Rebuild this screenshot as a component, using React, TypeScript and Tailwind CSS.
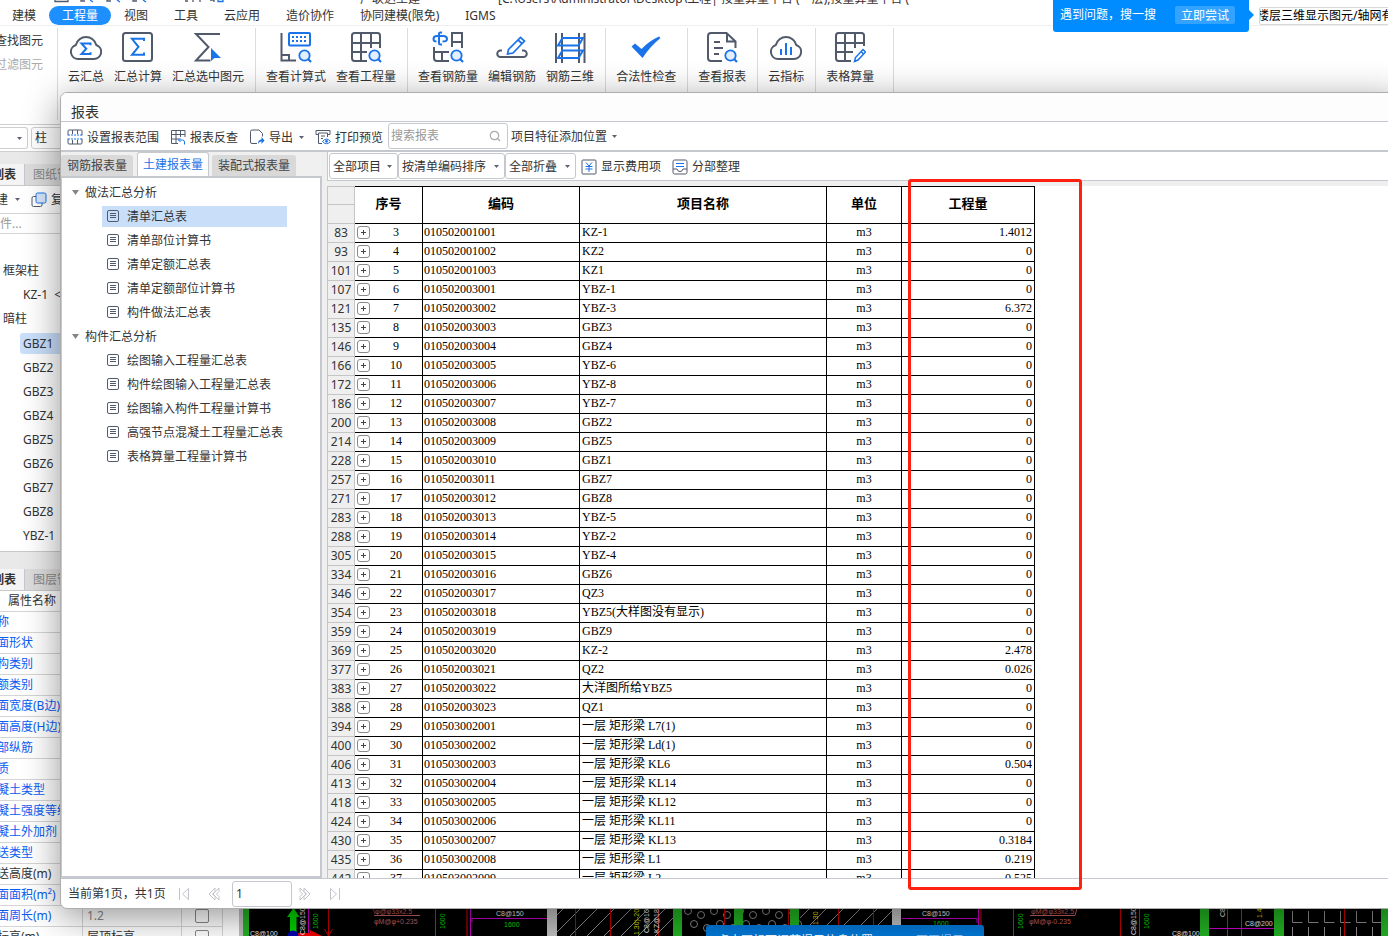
import React from "react";

const DARK = "#505a6b";
const BLUE = "#1a73e8";

type IconProps = { children: React.ReactNode; size?: string; box?: string };

function Svg({ children, size = "size-4", box = "0 0 16 16" }: IconProps) {
  return (
    <svg viewBox={box} className={`${size} shrink-0`} fill="none" stroke={DARK} aria-hidden="true">
      {children}
    </svg>
  );
}

function BigIcon({ children }: { children: React.ReactNode }) {
  return (
    <svg viewBox="0 0 32 32" className="size-8" fill="none" stroke={DARK} strokeWidth="2" aria-hidden="true">
      {children}
    </svg>
  );
}

const CLOUD = "M8.5 28h15.5a7.2 7.2 0 0 0 2.3-14A10.6 10.6 0 0 0 5.8 14 7.2 7.2 0 0 0 8.5 28z";

const lens = (
  <g stroke={BLUE} strokeWidth="1.8">
    <circle cx="24.5" cy="24.5" r="5.2" fill="#e3efff" />
    <path d="M28.3 28.3 31 31" strokeWidth="2.2" />
  </g>
);

const pencil = "M20.500 30.500 21.500 26.500 29 18.500l2.500 2.500-7.500 8zM27 20.500l2.500 2.500";

const ribbon: { label: string; icon: React.ReactNode }[][] = [
  [
    {
      label: "云汇总",
      icon: (
        <BigIcon>
          <path d={CLOUD} />
          <path d="M20.5 14.2v-1.7h-9l4.8 5.2-4.8 5.3h9v-1.7" stroke={BLUE} />
        </BigIcon>
      ),
    },
    {
      label: "汇总计算",
      icon: (
        <BigIcon>
          <rect x="1" y="2" width="29" height="28" rx="2.5" />
          <path d="M22 10V7.8H10l6.5 8-6.5 8h12v-2.2" stroke={BLUE} />
        </BigIcon>
      ),
    },
    {
      label: "汇总选中图元",
      icon: (
        <BigIcon>
          <path d="M28 3H4l12.5 13L4 29.5h14.5" />
          <path d="M19 17v13l3.5-3H29z" fill={BLUE} stroke="none" />
        </BigIcon>
      ),
    },
  ],
  [
    {
      label: "查看计算式",
      icon: (
        <BigIcon>
          <path d="M1.5 2v27.5H16M1.5 24H9v5" />
          <rect x="9" y="2" width="21" height="12.5" rx="1" stroke={BLUE} />
          <path d="M12 6h16M12 10h16" stroke={BLUE} strokeDasharray="2 2" />
          {lens}
        </BigIcon>
      ),
    },
    {
      label: "查看工程量",
      icon: (
        <BigIcon>
          <path d="M30 17V4.5Q30 2 27.5 2h-23Q2 2 2 4.5v22.500Q2 30 4.5 30H17M2 12h28M2 21h15M11 2v28M21 2v15" />
          {lens}
        </BigIcon>
      ),
    },
  ],
  [
    {
      label: "查看钢筋量",
      icon: (
        <BigIcon>
          <path d="M20 16V2h10v15M20 11h10M2 16v11q0 3 3 3h12M2 21h15M10 21v9" />
          <path d="M10 1.500H8.500Q7 1.500 7 3v9q0 1.500 1.500 1.500H10M12 5H5Q1.500 5 1.500 8q0 2.500 3 2.500M10.500 10.500Q15 10.500 15 8t-3-3" stroke={BLUE} />
          {lens}
        </BigIcon>
      ),
    },
    {
      label: "编辑钢筋",
      icon: (
        <BigIcon>
          <path d="M6 19.500H4.500a3.200 3.200 0 0 0 0 6.500h23a3.200 3.200 0 0 0 0-6.500H26" />
          <path d="m12.500 18.500 12-12 4 3.500-11.500 12-5.500 1zM22 9l4 3.500" stroke={BLUE} strokeWidth="1.7" />
        </BigIcon>
      ),
    },
    {
      label: "钢筋三维",
      icon: (
        <BigIcon>
          <path d="M2 2v30M8 2v30M25 2v30M30.500 2v30" />
          <path d="M8.500 7H29l-4.500 7.500H4zM8.500 19.500H29L24.500 27H4z" stroke={BLUE} />
        </BigIcon>
      ),
    },
  ],
  [
    {
      label: "合法性检查",
      icon: (
        <BigIcon>
          <path d="M1.500 15.500 5 12.500l6.500 5.500Q19 10 29 5.500l1.500 1.500Q20 15.500 12.500 27z" fill={BLUE} stroke="none" />
        </BigIcon>
      ),
    },
  ],
  [
    {
      label: "查看报表",
      icon: (
        <BigIcon>
          <path d="M16 30H5q-3 0-3-3V5q0-3 3-3h15.500l9 8.500V17M21 2v8.500h9M8 11h6M8 17h9M8 23h5" />
          {lens}
        </BigIcon>
      ),
    },
  ],
  [
    {
      label: "云指标",
      icon: (
        <BigIcon>
          <path d={CLOUD} />
          <path d="M11 18v6M16 12v12M21 16v8" stroke={BLUE} />
        </BigIcon>
      ),
    },
  ],
  [
    {
      label: "表格算量",
      icon: (
        <BigIcon>
          <path d="M30 15V4.500Q30 2 27.500 2h-23Q2 2 2 4.500v22.500Q2 30 4.500 30H17M2 12h28M2 21h17M11 2v28M21 2v15" />
          <path d={pencil} stroke={BLUE} strokeWidth="1.5" />
        </BigIcon>
      ),
    },
  ],
];

const menu = ["建模", "工程量", "视图", "工具", "云应用", "造价协作", "协同建模(限免)", "IGMS"];

const reportGroups = [
  { title: "做法汇总分析", items: ["清单汇总表", "清单部位计算书", "清单定额汇总表", "清单定额部位计算书", "构件做法汇总表"] },
  {
    title: "构件汇总分析",
    items: ["绘图输入工程量汇总表", "构件绘图输入工程量汇总表", "绘图输入构件工程量计算书", "高强节点混凝土工程量汇总表", "表格算量工程量计算书"],
  },
];

const rows: [number, number, string, string, string][] = [
  [83, 3, "010502001001", "KZ-1", "1.4012"],
  [93, 4, "010502001002", "KZ2", "0"],
  [101, 5, "010502001003", "KZ1", "0"],
  [107, 6, "010502003001", "YBZ-1", "0"],
  [121, 7, "010502003002", "YBZ-3", "6.372"],
  [135, 8, "010502003003", "GBZ3", "0"],
  [146, 9, "010502003004", "GBZ4", "0"],
  [166, 10, "010502003005", "YBZ-6", "0"],
  [172, 11, "010502003006", "YBZ-8", "0"],
  [186, 12, "010502003007", "YBZ-7", "0"],
  [200, 13, "010502003008", "GBZ2", "0"],
  [214, 14, "010502003009", "GBZ5", "0"],
  [228, 15, "010502003010", "GBZ1", "0"],
  [257, 16, "010502003011", "GBZ7", "0"],
  [271, 17, "010502003012", "GBZ8", "0"],
  [283, 18, "010502003013", "YBZ-5", "0"],
  [288, 19, "010502003014", "YBZ-2", "0"],
  [305, 20, "010502003015", "YBZ-4", "0"],
  [334, 21, "010502003016", "GBZ6", "0"],
  [346, 22, "010502003017", "QZ3", "0"],
  [354, 23, "010502003018", "YBZ5(大样图没有显示)", "0"],
  [359, 24, "010502003019", "GBZ9", "0"],
  [369, 25, "010502003020", "KZ-2", "2.478"],
  [377, 26, "010502003021", "QZ2", "0.026"],
  [383, 27, "010502003022", "大洋图所给YBZ5", "0"],
  [388, 28, "010502003023", "QZ1", "0"],
  [394, 29, "010503002001", "一层 矩形梁 L7(1)", "0"],
  [400, 30, "010503002002", "一层 矩形梁 Ld(1)", "0"],
  [406, 31, "010503002003", "一层 矩形梁 KL6", "0.504"],
  [413, 32, "010503002004", "一层 矩形梁 KL14", "0"],
  [418, 33, "010503002005", "一层 矩形梁 KL12", "0"],
  [424, 34, "010503002006", "一层 矩形梁 KL11", "0"],
  [430, 35, "010503002007", "一层 矩形梁 KL13", "0.3184"],
  [435, 36, "010503002008", "一层 矩形梁 L1", "0.219"],
  [442, 37, "010503002009", "一层 矩形梁 L2", "0.525"],
];

const properties: { name: string; plain?: boolean; value?: string }[] = [
  { name: "称" },
  { name: "面形状" },
  { name: "构类别" },
  { name: "额类别" },
  { name: "面宽度(B边)" },
  { name: "面高度(H边)" },
  { name: "部纵筋" },
  { name: "质" },
  { name: "凝土类型" },
  { name: "凝土强度等级" },
  { name: "凝土外加剂" },
  { name: "送类型" },
  { name: "送高度(m)", plain: true },
  { name: "面面积(m²)" },
  { name: "面周长(m)", value: "1.2" },
  { name: "标高(m)", plain: true, value: "层顶标高" },
];

function Caret({ className = "" }: { className?: string }) {
  return (
    <svg viewBox="0 0 5 3" className={`h-[3px] w-[5px] shrink-0 ${className}`} aria-hidden="true">
      <path d="M0 0h5L2.500 3z" fill="#5b6270" />
    </svg>
  );
}

function TopArea() {
  return (
    <header className="shrink-0 bg-white">
      <div className="flex h-[6px] items-end overflow-hidden pl-[54px] text-[#3a3030]" aria-hidden="true">
        <svg viewBox="54 0 170 6" className="h-[6px] w-[170px] shrink-0" fill="none" stroke={DARK} strokeWidth="1.3">
          <path d="M55 0v1.500h13V0M81 0v1h4M107 0v1h4M133 0v1h4M185 1h3M193 0v2M200 0v2M210 0h4v2" />
          <path d="M90 0l3 2M117 0l3 2M143 0l3 2M218 0v1.500h5V0" stroke={BLUE} />
        </svg>
        <div className="flex items-end leading-[14px] whitespace-nowrap">
          <span className="w-[76px]" />
          <span className="w-[198px] pl-[60px]">广联达土建</span>
          <span>[C:\Users\Administrator\Desktop\工程| 按量算量平台 (一层),按量算量平台 (</span>
        </div>
      </div>
      <nav className="-ml-px flex h-5 items-center border-b border-[#efefef]">
        {menu.map((m, i) => (
          <button
            key={m}
            className={`h-[19px] rounded-full px-[13px] leading-[19px] whitespace-nowrap ${i === 1 ? "bg-[#1e8fff] text-white" : ""}`}
          >
            {m}
          </button>
        ))}
      </nav>
      <div className="flex h-[98px] overflow-hidden pt-[2px]">
        <div className="flex w-[57px] shrink-0 flex-col items-end pt-px pr-[14px] leading-6 whitespace-nowrap">
          <button>查找图元</button>
          <button className="text-[#aaa]">过滤图元</button>
        </div>
        {ribbon.map((group, i) => (
          <div key={i} className="flex h-[92px] shrink-0 items-start gap-[10px] border-l border-[#dcdcdc] pt-[3px] pr-[11px] pl-[10px]">
            {group.map((b) => (
              <button key={b.label} className="flex flex-col items-center gap-[5px] leading-[18px] whitespace-nowrap">
                {b.icon}
                {b.label}
              </button>
            ))}
          </div>
        ))}
        <div className="ml-2 h-[92px] border-l border-[#dcdcdc]" />
      </div>
    </header>
  );
}

function PanelTabs({ active, other }: { active: string; other: string }) {
  return (
    <div className="flex h-[22px] shrink-0 border-b border-[#c9c9c9] bg-[#dcdcdc] leading-[22px] whitespace-nowrap">
      <button className="flex w-[25px] shrink-0 justify-end border-r border-[#c5c8cf] bg-[#f4f4f4] pr-2 font-bold">{active}</button>
      <button className="w-[35px] overflow-hidden pl-2 text-left text-[#888]">{other}</button>
    </div>
  );
}

function SidePanel() {
  const cell = "border-r border-b border-[#d5d5d5] p-0";
  return (
    <aside className="flex w-[239px] shrink-0 flex-col overflow-hidden bg-white whitespace-nowrap">
      <div className="flex h-7 shrink-0 items-center gap-[3px] border-y border-[#cfcfcf]">
        <button aria-label="楼层" className="flex h-[22px] w-7 items-center justify-end rounded-r-[3px] border border-l-0 border-[#cfcfcf] pr-[5px]">
          <Caret />
        </button>
        <button className="h-[22px] w-[120px] rounded-[3px] border border-[#cfcfcf] pl-[3px] text-left">柱</button>
      </div>
      <div className="h-3 shrink-0 bg-[#e9e9e9]" />
      <PanelTabs active="列表" other="图纸管理" />
      <div className="flex h-7 shrink-0 items-center border-b border-[#d5d5d5]">
        <button className="-ml-1 flex items-center gap-[7px]">
          建
          <Caret />
        </button>
        <button className="ml-[11px] flex items-center gap-1">
          <Svg>
            <rect x="1" y="4.500" width="10" height="10" rx="1.500" />
            <rect x="5" y="1" width="10" height="10" rx="1.500" fill="#d6e6fb" stroke={BLUE} />
          </Svg>
          复制
        </button>
      </div>
      <input aria-label="搜索构件" placeholder="件..." className="h-5 shrink-0 border-b border-[#d5d5d5] placeholder:text-[#999]" />
      <ul className="shrink-0 pt-[25px] pb-1 leading-6">
        <li className="pl-[3px]">框架柱</li>
        <li className="pl-[23px]">KZ-1&nbsp; &lt;</li>
        <li className="pl-[3px]">暗柱</li>
        {["GBZ1", "GBZ2", "GBZ3", "GBZ4", "GBZ5", "GBZ6", "GBZ7", "GBZ8", "YBZ-1"].map((n, i) => (
          <li key={n} className="flex h-6 items-center pl-5">
            <span className={`h-[21px] w-[120px] rounded-[3px] pl-[3px] leading-[21px] ${i === 0 ? "bg-[#c9dffa]" : ""}`}>{n}</span>
          </li>
        ))}
      </ul>
      <div className="h-[18px] shrink-0 border-t border-[#c9c9c9] bg-[#e9e9e9]" />
      <PanelTabs active="列表" other="图层管理" />
      <table className="w-[223px] shrink-0 table-fixed border-separate border-spacing-0 leading-5">
        <colgroup>
          <col className="w-[83px]" />
          <col className="w-[99px]" />
          <col className="w-[41px]" />
        </colgroup>
        <thead>
          <tr className="h-[21px]">
            <th className={`${cell} pl-2 text-left font-normal`}>属性名称</th>
            <th className={`${cell} font-normal`}>属性值</th>
            <th className={`${cell} font-normal`}>附加</th>
          </tr>
        </thead>
        <tbody>
          {properties.map((p) => (
            <tr key={p.name} className="h-[21px]">
              <td className={`${cell} overflow-hidden`}>
                <span className={`-ml-[3px] ${p.plain ? "" : "text-[#0b5cf0]"}`}>{p.name}</span>
              </td>
              <td className={`${cell} pl-1 ${p.plain ? "" : "text-[#888]"}`}>{p.value}</td>
              <td className={cell}>
                {p.value && (
                  <input
                    type="checkbox"
                    aria-label={p.name}
                    className="mx-auto block size-[14px] appearance-none rounded-[2px] border border-[#888]"
                  />
                )}
              </td>
            </tr>
          ))}
        </tbody>
      </table>
    </aside>
  );
}

function VText({ x, y, fill, children }: { x: number; y: number; fill: string; children: string }) {
  return (
    <text transform={`translate(${x} ${y}) rotate(-90)`} fill={fill} stroke="none">
      {children}
    </text>
  );
}

function Drawing() {
  const range = (n: number) => Array.from({ length: n }, (_, i) => i);
  return (
    <svg
      viewBox="239 908 1149 28"
      className="h-7 w-[1149px] shrink-0"
      fill="none"
      fontSize="7"
      fontFamily="Liberation Sans, sans-serif"
      aria-hidden="true"
    >
      <defs>
        <clipPath id="hatchA">
          <path d="M557 908h116v28H557z" />
        </clipPath>
        <clipPath id="hatchB">
          <path d="M800 908h92v28h-92z" />
        </clipPath>
      </defs>
      <path d="M239 908h4v28h-4zM547 908h10v28h-10zM892 908h9v28h-9z" fill="#bdbdbd" />
      <g stroke="#8a8a8a">
        <g clipPath="url(#hatchA)">
          {range(8).map((i) => (
            <path key={i} d={`M${534 + i * 17} 938l31-31`} />
          ))}
        </g>
        <g clipPath="url(#hatchB)">
          {range(8).map((i) => (
            <path key={i} d={`M${780 + i * 17} 938l31-31`} />
          ))}
        </g>
        {range(9).map((i) => (
          <g key={i}>
            <circle cx={688 + i * 13} cy={i % 2 ? 915 : 911} r="3.500" />
            <circle cx={694 + i * 13} cy={i % 2 ? 928 : 924} r="3.500" />
          </g>
        ))}
        {range(6).map((i) => (
          <path key={i} d={`M${1292.5 + i * 16} 911v11.500h10M${1292.5 + i * 16} 927v9`} />
        ))}
      </g>
      <path
        d="M243 908h6v28h-6zM673 908h9v28h-9zM734 908h9v28h-9zM790 908h9v28h-9zM1200 908h9v28h-9zM1274 908h10v28h-10zM1381 908h7v28h-7z"
        fill="#22b022"
      />
      <g stroke="#c00000">
        <path d="M328.500 908v28m-4-7 4 7 4-7M575.500 908v28M610.500 908v28M658.500 908v28M724.500 908v28M788.500 908v28M838.500 908v28M873.500 908v28M1120.500 908v28M1344.500 908v28" />
        <path d="M467 908v28M981 908v28" stroke="#700000" strokeWidth="2" />
      </g>
      <path
        d="M308.500 908v28M435.500 908v28M470.500 908v28M472 922v-3.500h75M902 918.500h75v4M978.500 908v28M1013.500 908v28M1139.500 908v28M1227.500 908v28M1241.500 908v28M1209 928.500h65"
        stroke="#c400c4"
      />
      <path d="M374 915.500h46M1030 915.500h45l2-7" stroke="#c46060" />
      <path d="M290 936v-19h-3l6.500-9 6 9h-3v19z" fill="#00d000" />
      <path d="M298 933h12v-3l12 6v1h-24z" fill="#f00000" />
      <circle cx="293" cy="936" r="5.500" fill="#0000b0" />
      <g fill="#c46060">
        <text x="373" y="914">\φ@φ33x2.5</text>
        <text x="374" y="924">φM@φ+0.235</text>
        <text x="1031" y="914">φM@φ33x2.5</text>
        <text x="1029" y="924">φM@φ-0.235</text>
      </g>
      <g fill="#e6e6e6">
        <text x="250" y="936">C8@100</text>
        <text x="496" y="916">C8@150</text>
        <text x="922" y="916">C8@150</text>
        <text x="1172" y="936">C8@100</text>
        <text x="1245" y="926">C8@200</text>
      </g>
      <g fill="#00d800">
        <text x="504" y="927">1600</text>
        <text x="933" y="926">1600</text>
      </g>
      <VText x={305} y={935} fill="#e6e6e6">C8@150</VText>
      <VText x={318} y={929} fill="#00d800">1600</VText>
      <VText x={445} y={929} fill="#00d800">1600</VText>
      <VText x={639} y={935} fill="#d8d800">1.30)-200</VText>
      <VText x={649} y={933} fill="#e6e6e6">C8@100/200</VText>
      <VText x={659} y={933} fill="#e6e6e6">KZ@180</VText>
      <VText x={818} y={925} fill="#d8d800">1.30</VText>
      <VText x={1023} y={929} fill="#00d800">1600</VText>
      <VText x={1136} y={935} fill="#e6e6e6">C8@150</VText>
      <VText x={1149} y={929} fill="#00d800">1600</VText>
      <VText x={1225} y={917} fill="#e6e6e6">C8</VText>
      <VText x={1262} y={918} fill="#d8d800">1.40</VText>
    </svg>
  );
}

function ToolButton({ icon, children }: { icon: React.ReactNode; children: React.ReactNode }) {
  return (
    <button className="flex items-center gap-1 whitespace-nowrap">
      {icon}
      <span className="flex items-center pt-px">{children}</span>
    </button>
  );
}

function Picker({ label, value, className }: { label: string; value: string; className: string }) {
  return (
    <label className={`relative flex h-[26px] shrink-0 items-center rounded-[3px] ${className}`}>
      <select aria-label={label} className="size-full appearance-none bg-transparent pt-[2px] pl-[3px]">
        <option>{value}</option>
      </select>
      <Caret className="pointer-events-none absolute right-[5px]" />
    </label>
  );
}

function ReportTree() {
  return (
    <div className="flex w-[261px] shrink-0 flex-col bg-[#f0f0f0]">
      <div className="flex h-6 shrink-0 items-end whitespace-nowrap">
        <button className="h-[21px] rounded-t-[3px] bg-[#d9d9d9] px-[6px] text-[#444]">钢筋报表量</button>
        <button className="mr-[3px] ml-1 h-6 rounded-t-[3px] border border-b-0 border-[#c5c8cf] bg-white px-[5px] pt-px text-[#1a73e8]">
          土建报表量
        </button>
        <button className="h-[21px] rounded-t-[3px] bg-[#d9d9d9] px-[6px] text-[#444]">装配式报表量</button>
      </div>
      <div className="min-h-0 flex-1 overflow-hidden border-y-2 border-r-2 border-l border-[#c5c8cf] bg-white pt-[2px]">
        {reportGroups.map((g, gi) => (
          <section key={g.title}>
            <h3 className="flex h-6 items-center pl-[10px]">
              <svg viewBox="0 0 7 5" className="mr-[6px] h-[5px] w-[7px]" aria-hidden="true">
                <path d="M0 0h7L3.500 5z" fill="#858585" />
              </svg>
              <span className="pt-[2px]">{g.title}</span>
            </h3>
            <ul>
              {g.items.map((it, i) => (
                <li key={it} className="flex h-6 items-center pl-10">
                  <button
                    className={`flex h-[21px] w-[185px] items-center gap-[7px] pl-1 text-left whitespace-nowrap ${gi === 0 && i === 0 ? "bg-[#c9dff9]" : ""}`}
                  >
                    <Svg size="size-[14px]" box="0 0 14 14">
                      <rect x="1.500" y="1.500" width="11" height="11" rx="1.500" />
                      <path d="M4 4.500h6M4 6.500h6M4 8.500h6" />
                    </Svg>
                    <span className="pt-[2px]">{it}</span>
                  </button>
                </li>
              ))}
            </ul>
          </section>
        ))}
      </div>
    </div>
  );
}

function ReportTable() {
  const th = "border-t border-r border-b border-black p-0 pb-[3px] text-[13px] font-bold text-black";
  const td = "border-r border-b border-black p-0 overflow-hidden";
  const side = "border-x border-b border-[#c5c5c5] bg-[#efefef] p-0 font-normal";
  return (
    <div className="min-h-0 flex-1 overflow-hidden bg-white">
      <table className="w-[708px] table-fixed border-separate border-spacing-0 whitespace-nowrap text-black">
        <colgroup>
          <col className="w-[28px]" />
          <col className="w-[68px]" />
          <col className="w-[157px]" />
          <col className="w-[247px]" />
          <col className="w-[75px]" />
          <col className="w-[133px]" />
        </colgroup>
        <thead>
          <tr className="h-[19px]">
            <td className={`${side} border-t`} />
            <th rowSpan={2} className={th}>序号</th>
            <th rowSpan={2} className={th}>编码</th>
            <th rowSpan={2} className={th}>项目名称</th>
            <th rowSpan={2} className={th}>单位</th>
            <th rowSpan={2} className={th}>工程量</th>
          </tr>
          <tr className="h-[19px]">
            <td className={side} />
          </tr>
        </thead>
        <tbody className="align-top font-[family-name:'Liberation_Serif','Noto_Sans_CJK_SC',serif] leading-4">
          {rows.map(([no, seq, code, name, qty]) => (
            <tr key={no} className="h-[19px]">
              <th className={`${side} text-center font-[family-name:'Noto_Sans',sans-serif] leading-[18px] text-[#333]`}>{no}</th>
              <td className={td}>
                <div className="flex h-[18px] items-start pl-[2px]">
                  <button
                    aria-label={`展开 ${seq}`}
                    className="mt-[2px] flex size-[13px] shrink-0 items-center justify-center rounded-[3px] border border-[#8a8a8a]"
                  >
                    <svg viewBox="0 0 5 5" className="size-[5px]" stroke="#444" aria-hidden="true">
                      <path d="M2.500 0v5M0 2.500h5" />
                    </svg>
                  </button>
                  <span className="flex-1 text-center">{seq}</span>
                </div>
              </td>
              <td className={`${td} pl-px`}>{code}</td>
              <td className={`${td} pl-[2px]`}>{name}</td>
              <td className={`${td} text-center`}>m3</td>
              <td className={`${td} pr-[2px] text-right`}>{qty}</td>
            </tr>
          ))}
        </tbody>
      </table>
    </div>
  );
}

function PageArrow({ label, d }: { label: string; d: string }) {
  return (
    <button aria-label={label} className="flex">
      <svg viewBox="0 0 12 14" className="h-[14px] w-3" fill="none" stroke="#c2c4ca" aria-hidden="true">
        <path d={d} />
      </svg>
    </button>
  );
}

function ReportDialog() {
  return (
    <section
      aria-label="报表"
      className="absolute top-[92px] -right-4 bottom-[27px] left-[60px] flex flex-col overflow-hidden rounded-[7px] border border-[#adadad] bg-white shadow-[0_8px_36px_rgba(0,0,0,0.42)]"
    >
      <h2 className="flex h-[29px] shrink-0 items-center border-b border-[#c5c8cf] bg-[#fdfdfd] pt-[10px] pl-[10px] text-sm">报表</h2>
      <div className="flex h-[30px] shrink-0 items-center border-b-2 border-[#c5c8cf] pl-[6px]">
        <div className="flex items-center gap-[11px] pt-[2px]">
          <ToolButton
            icon={
              <Svg>
                <path d="M1 6.500V2q0-1 1-1h12q1 0 1 1v4.500M1 9.500V14q0 1 1 1h12q1 0 1-1V9.500M5.500 1v4M10.500 1v4M5.500 11v4M10.500 11v4" />
                <path d="M1 6h14M1 10h14" stroke={BLUE} strokeDasharray="2 1" />
              </Svg>
            }
          >
            设置报表范围
          </ToolButton>
          <ToolButton
            icon={
              <Svg>
                <path d="M15 8V1.500H1.500v13H8M1.500 5.500H15M1.500 10H9M6 1.500v13M10.500 1.500V8" />
                <path d="M10.500 9 8.500 11l2 2M8.500 11h4q2 0 2 2v2.500" stroke={BLUE} />
              </Svg>
            }
          >
            报表反查
          </ToolButton>
          <ToolButton
            icon={
              <Svg>
                <path d="M8 14.500H3q-1.500 0-1.500-1.500V2.500Q1.500 1 3 1h7l3.500 3.500v3" />
                <path d="M9 15q0-4.500 3.500-4.500V8l3 3.500-3 3.500v-2.500Q10.500 12 9 15z" fill={BLUE} stroke="none" />
              </Svg>
            }
          >
            导出
            <Caret className="ml-[6px]" />
          </ToolButton>
          <ToolButton
            icon={
              <Svg>
                <path d="M3 5.500H1V1.500h14v4h-2M3.500 14.500V4h9v4M3.500 14.500H7M6 7h4M6 9.500h2" />
                <path d="M7.500 12.500q4-5 8 0-4 4.500-8 0z" stroke={BLUE} />
                <circle cx="11.500" cy="12.300" r="1" fill={BLUE} stroke={BLUE} />
              </Svg>
            }
          >
            打印预览
          </ToolButton>
        </div>
        <label className="ml-[5px] flex h-[26px] w-[120px] shrink-0 items-center rounded-[3px] border border-[#c5c8cf] pr-[6px] pl-[2px]">
          <input aria-label="搜索报表" placeholder="搜索报表" className="min-w-0 flex-1 placeholder:text-[#999]" />
          <svg viewBox="0 0 12 12" className="size-3" fill="none" stroke="#aaa" strokeWidth="1.2" aria-hidden="true">
            <circle cx="5.500" cy="5.500" r="4.200" />
            <path d="m8.500 8.500 2.500 2.500" />
          </svg>
        </label>
        <Picker label="添加位置" value="项目特征添加位置" className="w-[114px]" />
      </div>
      <div className="flex min-h-0 flex-1 bg-[#efefef]">
        <ReportTree />
        <div className="ml-[5px] flex min-w-0 flex-1 flex-col">
          <div className="flex h-[29px] shrink-0 items-center border-b border-l border-[#c5c8cf] bg-white pl-px">
            <Picker label="项目范围" value="全部项目" className="w-[69px] border border-[#c5c8cf]" />
            <Picker label="排序方式" value="按清单编码排序" className="w-[107px] border border-[#c5c8cf]" />
            <Picker label="折叠方式" value="全部折叠" className="w-[71px] border border-[#c5c8cf]" />
            <div className="ml-[5px] flex gap-[11px] pt-px">
              <ToolButton
                icon={
                  <Svg>
                    <rect x="1" y="1" width="14" height="14" rx="1" />
                    <path d="m5 3.500 3 3.500 3-3.500M8 7v6M4.500 7.500h7M4.500 10h7" stroke={BLUE} />
                  </Svg>
                }
              >
                显示费用项
              </ToolButton>
              <ToolButton
                icon={
                  <Svg>
                    <rect x="1" y="1" width="14" height="14" rx="1.500" />
                    <path d="M1 10h4q.5 2.500 3 2.500t3-2.500h4" />
                    <path d="M4 4.500h8M4 7.500h8" stroke={BLUE} />
                  </Svg>
                }
              >
                分部整理
              </ToolButton>
            </div>
          </div>
          <div className="h-[5px] shrink-0" />
          <ReportTable />
        </div>
      </div>
      <footer className="flex h-[30px] shrink-0 items-center border-t border-[#c5c8cf] pl-[7px]">
        <span className="w-[110px] whitespace-nowrap">当前第1页，共1页</span>
        <div className="flex items-center gap-[18px]">
          <PageArrow label="首页" d="M1.500 1v12M10.500 1.500 4.500 7l6 5.500z" />
          <PageArrow label="上一页" d="M7 1 1 7l6 6V9.500L4.500 7 7 4.500zM11 1 5 7l6 6V9.500L8.500 7 11 4.500z" />
        </div>
        <input aria-label="页码" defaultValue="1" className="mr-[7px] ml-3 h-[26px] w-[60px] rounded-[3px] border border-[#c5c8cf] pl-[3px]" />
        <div className="flex items-center gap-[18px]">
          <PageArrow label="下一页" d="M1 1l6 6-6 6V9.500L3.500 7 1 4.500zM5 1l6 6-6 6V9.500L7.500 7 5 4.500z" />
          <PageArrow label="末页" d="M10.500 1v12M1.500 1.500 7.500 7l-6 5.500z" />
        </div>
      </footer>
    </section>
  );
}

export default function App() {
  return (
    <div className="relative flex h-screen flex-col overflow-hidden bg-white font-[family-name:'Noto_Sans','Noto_Sans_CJK_SC',sans-serif] text-xs text-[#333]">
      <TopArea />
      <div className="flex min-h-0 flex-1">
        <SidePanel />
        <main className="flex min-w-0 flex-1 flex-col justify-end overflow-hidden bg-black">
          <Drawing />
        </main>
      </div>

      <div className="absolute top-[925px] left-[706px] flex h-[24px] w-[278px] items-start justify-between rounded-[3px] bg-[#0078d7] pt-[7px] pr-5 pl-[11px] leading-[18px] whitespace-nowrap text-white">
        <span>点击图标可调节提示信息位置</span>
        <button className="text-[#8cc4f5]">不再提示</button>
      </div>

      <ReportDialog />

      <div className="absolute top-[7px] left-[1259px] h-[18px] w-[140px] overflow-hidden rounded-[2px] border border-[#d8d8d8] bg-white">
        <input aria-label="快捷搜索" defaultValue="楼层三维显示图元/轴网有" className="-ml-[3px] w-[150px] leading-4 text-black" />
      </div>
      <div className="absolute top-0 left-[1053px] flex h-8 w-[196px] items-center justify-between rounded-b-[3px] bg-[#008cff] pr-[14px] pb-[2px] pl-[7px] whitespace-nowrap text-white">
        <span>遇到问题，搜一搜</span>
        <button className="h-[18px] rounded-[2px] bg-[#33a3ff] px-[6px] leading-[17px]">立即尝试</button>
        <svg viewBox="0 0 6 12" className="absolute top-[9px] -right-[5px] h-3 w-[6px]" aria-hidden="true">
          <path d="M0 0l6 6-6 6z" fill="#008cff" />
        </svg>
      </div>

      <div className="pointer-events-none absolute top-[179px] left-[908px] h-[711px] w-[174px] rounded-[3px] border-3 border-[#ff2010]" />
    </div>
  );
}
